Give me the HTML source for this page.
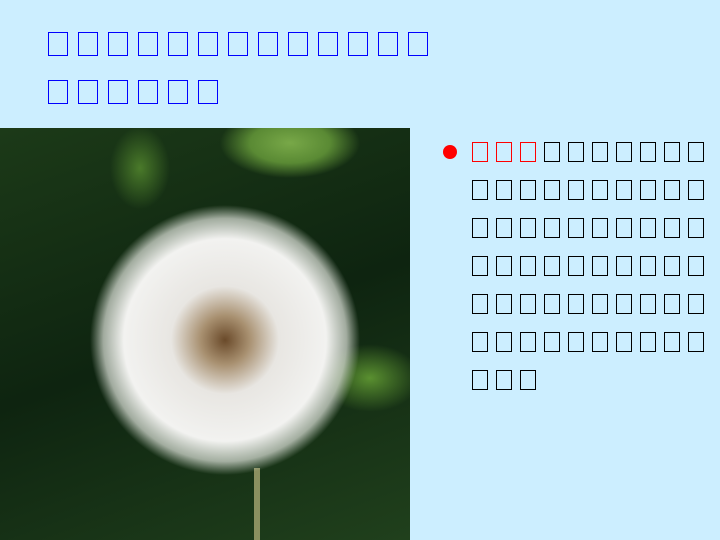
<!DOCTYPE html>
<html><head><meta charset="utf-8"><style>
body{margin:0;width:720px;height:540px;background:#cceeff;position:relative;overflow:hidden;font-family:"Liberation Sans","Noto Sans CJK SC",sans-serif}
.row{position:absolute;display:flex}
.t span{width:18px;height:22px;border:1px solid #0000ff;margin-right:10px;color:transparent;font-size:12px;overflow:hidden;box-sizing:content-box}
.r span{width:14px;height:18px;border:1px solid #000;margin-right:8px;color:transparent;font-size:10px;overflow:hidden}
.r span.red{border-color:#ff0000}
#img{position:absolute;left:0;top:128px;width:410px;height:412px;overflow:hidden;
background:radial-gradient(ellipse 60px 30px at 290px 15px,#78a848 0,#5a8a34 40px,transparent 70px),radial-gradient(ellipse at 140px 40px,#4a7a2a 0,transparent 30px),radial-gradient(ellipse at 370px 250px,#5a9030 0,transparent 50px),linear-gradient(160deg,#1c3a18,#0e2410 50%,#20401c)}
</style></head><body>
<div class="row t" style="left:48px;top:32px"><span>蒲</span><span>公</span><span>英</span><span>的</span><span>种</span><span>子</span><span>是</span><span>怎</span><span>样</span><span>传</span><span>播</span><span>出</span><span>去</span></div>
<div class="row t" style="left:48px;top:80px"><span>的</span><span>呢</span><span>？</span><span>想</span><span>一</span><span>想</span></div>
<div id="img">
<svg width="410" height="412" viewBox="0 0 410 412">
<defs><radialGradient id="g" cx="0.5" cy="0.5" r="0.5">
<stop offset="0" stop-color="#6a4a2a"/><stop offset="0.18" stop-color="#a89070"/><stop offset="0.4" stop-color="#e8e6e2"/><stop offset="0.75" stop-color="#f2f2f0"/><stop offset="0.9" stop-color="#e0e4dc" stop-opacity="0.7"/><stop offset="1" stop-color="#d0d8cc" stop-opacity="0"/></radialGradient></defs>
<rect x="254" y="340" width="6" height="72" fill="#8a9060"/>
<circle cx="225" cy="212" r="135" fill="url(#g)"/>
</svg></div>
<div style="position:absolute;left:443px;top:145px;width:14px;height:14px;border-radius:50%;background:#ff0000"></div>
<div class="row r" style="left:472px;top:142px"><span class="red">蒲</span><span class="red">公</span><span class="red">英</span><span>的</span><span>种</span><span>子</span><span>上</span><span>有</span><span>许</span><span>多</span></div>
<div class="row r" style="left:472px;top:180px"><span>白</span><span>色</span><span>的</span><span>绒</span><span>毛</span><span>，</span><span>像</span><span>一</span><span>把</span><span>把</span></div>
<div class="row r" style="left:472px;top:218px"><span>小</span><span>伞</span><span>。</span><span>风</span><span>一</span><span>吹</span><span>，</span><span>种</span><span>子</span><span>就</span></div>
<div class="row r" style="left:472px;top:256px"><span>随</span><span>风</span><span>飘</span><span>散</span><span>，</span><span>落</span><span>在</span><span>哪</span><span>里</span><span>，</span></div>
<div class="row r" style="left:472px;top:294px"><span>就</span><span>在</span><span>哪</span><span>里</span><span>生</span><span>根</span><span>发</span><span>芽</span><span>，</span><span>长</span></div>
<div class="row r" style="left:472px;top:332px"><span>出</span><span>新</span><span>的</span><span>蒲</span><span>公</span><span>英</span><span>来</span><span>，</span><span>这</span><span>就</span></div>
<div class="row r" style="left:472px;top:370px"><span>是</span><span>传</span><span>播</span></div>
</body></html>
